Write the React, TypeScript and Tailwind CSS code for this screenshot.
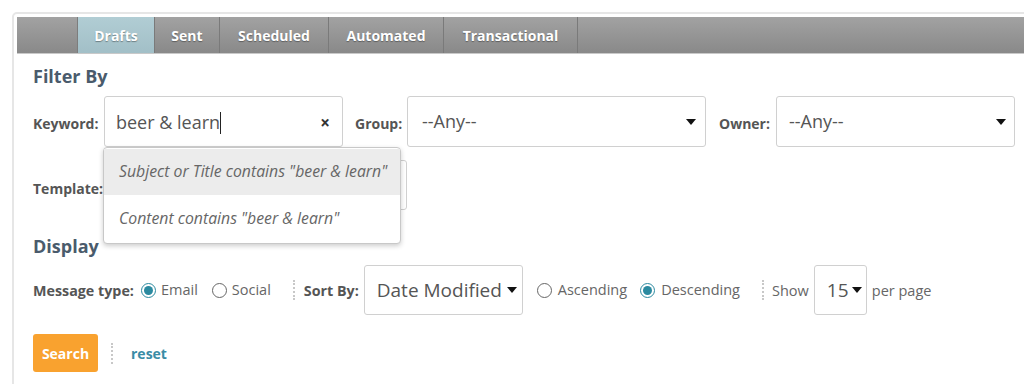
import React from 'react';

const font = { fontFamily: '"Open Sans", "Liberation Sans", sans-serif' };

function Caret() {
  return (
    <svg width="10" height="6" viewBox="0 0 10 6" className="shrink-0 block">
      <path d="M0 0 L10 0 L5 6 Z" fill="#111" />
    </svg>
  );
}

function Radio({ checked }: { checked?: boolean }) {
  return checked ? (
    <span className="block w-[15px] h-[15px] rounded-full border border-[#2b8aa0] flex items-center justify-center shrink-0">
      <span className="block w-[9px] h-[9px] rounded-full bg-[#2b8aa0]" />
    </span>
  ) : (
    <span className="block w-[15px] h-[15px] rounded-full border border-[#666] shrink-0" />
  );
}

function Sep({ h = 'h-[20px]' }: { h?: string }) {
  return <span className={`block border-l-2 border-dotted border-[#c8c8c8] ${h}`} />;
}

const tabs = [
  { label: 'Drafts', w: 'w-[77px]', active: true },
  { label: 'Sent', w: 'w-[65px]' },
  { label: 'Scheduled', w: 'w-[109px]' },
  { label: 'Automated', w: 'w-[115px]' },
  { label: 'Transactional', w: 'w-[134px]' },
];

export default function App() {
  return (
    <div className="w-[1024px] h-[384px] overflow-hidden bg-white pt-[12px] pl-[12px]" style={font}>
      <div className="w-[1040px] h-[400px] border-2 border-[#e6e6e6] rounded-[5px] pt-[3px] pl-[3px]">
        {/* tabs */}
        <div className="h-[37px] flex bg-gradient-to-b from-[#a2a2a2] to-[#898989] border-b border-[#c9c9c9]">
          <div className="w-[61px] border-r border-[#7d7d7d]" />
          {tabs.map((t) => (
            <div
              key={t.label}
              className={`${t.w} flex items-center justify-center text-[14px] font-bold text-white border-r border-[#7a7a7a] [text-shadow:0_1px_1px_rgba(0,0,0,0.35)] ${
                t.active ? 'bg-gradient-to-b from-[#b1cdd4] to-[#a2bfc7]' : ''
              }`}
            >
              {t.label}
            </div>
          ))}
        </div>

        <div className="pl-[16px] pt-[10px] relative">
          <h2 className="text-[18px] leading-[24px] font-bold text-[#4a5b6c]">Filter By</h2>

          {/* keyword row */}
          <div className="mt-[8px] flex items-center h-[51px]">
            <span className="pt-[4px] text-[14px] font-bold text-[#555] w-[71px]">Keyword:</span>
            <div className="w-[239px] h-[51px] border border-[#d0d0d0] rounded-[3px] flex items-center pl-[11px] pr-[12px] pt-[2px]">
              <span className="text-[18px] text-[#555]">beer &amp; learn</span>
              <span className="w-px h-[22px] bg-[#222]" />
              <span className="ml-auto text-[17px] font-bold text-[#333]">×</span>
            </div>
            <span className="pt-[4px] ml-[12px] text-[14px] font-bold text-[#555] w-[52px]">Group:</span>
            <div className="w-[299px] h-[51px] border border-[#d0d0d0] rounded-[3px] flex items-center pl-[14px] pr-[9px]">
              <span className="text-[18px] text-[#555]">--Any--</span>
              <span className="ml-auto">
                <Caret />
              </span>
            </div>
            <span className="pt-[4px] ml-[13px] text-[14px] font-bold text-[#555] w-[57px]">Owner:</span>
            <div className="w-[239px] h-[51px] border border-[#d0d0d0] rounded-[3px] flex items-center pl-[12px] pr-[8px]">
              <span className="text-[18px] text-[#555]">--Any--</span>
              <span className="ml-auto">
                <Caret />
              </span>
            </div>
          </div>

          {/* template row */}
          <div className="mt-[13px] flex items-center h-[50px]">
            <span className="pt-[6px] text-[14px] font-bold text-[#555] w-[71px]">Template:</span>
            <div className="w-[303px] h-[50px] border border-[#d0d0d0] rounded-[3px]" />
          </div>

          {/* autocomplete dropdown */}
          <div className="absolute left-[86px] top-[93px] w-[298px] bg-white border border-[#c8c8c8] rounded-[4px] shadow-[0_2px_5px_rgba(0,0,0,0.2)] py-[1px]">
            <div className="h-[46px] bg-[#ececec] flex items-center pl-[15px] text-[15.8px] italic text-[#666]">
              Subject or Title contains "beer &amp; learn"
            </div>
            <div className="h-[47px] flex items-center pl-[15px] text-[15.8px] italic text-[#666]">
              Content contains "beer &amp; learn"
            </div>
          </div>

          <h2 className="mt-[24px] text-[18px] leading-[24px] font-bold text-[#4a5b6c]">Display</h2>

          {/* display row */}
          <div className="mt-[7px] flex items-center h-[50px] text-[14.5px] text-[#666]">
            <span className="pt-[2px] text-[14.3px] font-bold text-[#555] mr-[7px]">Message type:</span>
            <Radio checked />
            <span className="ml-[5px]">Email</span>
            <span className="ml-[14px]">
              <Radio />
            </span>
            <span className="ml-[5px]">Social</span>
            <span className="ml-[22px] flex items-center">
              <Sep />
            </span>
            <span className="pt-[2px] ml-[9px] text-[14.3px] font-bold text-[#555]">Sort By:</span>
            <div className="ml-[5px] w-[159px] h-[50px] border border-[#d0d0d0] rounded-[3px] flex items-center pl-[12px] pr-[5px]">
              <span className="text-[19px] text-[#555]">Date Modified</span>
              <span className="ml-auto">
                <Caret />
              </span>
            </div>
            <span className="ml-[14px]">
              <Radio />
            </span>
            <span className="ml-[6px]">Ascending</span>
            <span className="ml-[13px]">
              <Radio checked />
            </span>
            <span className="ml-[6px]">Descending</span>
            <span className="ml-[22px] flex items-center">
              <Sep />
            </span>
            <span className="ml-[8px] pt-[2px]">Show</span>
            <div className="ml-[5px] w-[53px] h-[50px] border border-[#d0d0d0] rounded-[3px] flex items-center pl-[12px] pr-[4px]">
              <span className="text-[19px] text-[#555]">15</span>
              <span className="ml-auto">
                <Caret />
              </span>
            </div>
            <span className="ml-[5px] pt-[2px]">per page</span>
          </div>

          {/* actions */}
          <div className="mt-[19px] flex items-center">
            <button className="w-[65px] h-[38px] bg-[#f9a22f] rounded-[3px] text-white text-[14px] font-bold">
              Search
            </button>
            <span className="ml-[13px] flex items-center">
              <Sep h="h-[21px]" />
            </span>
            <a className="ml-[18px] text-[14px] font-bold text-[#3a8ca5]">reset</a>
          </div>
        </div>
      </div>
    </div>
  );
}
